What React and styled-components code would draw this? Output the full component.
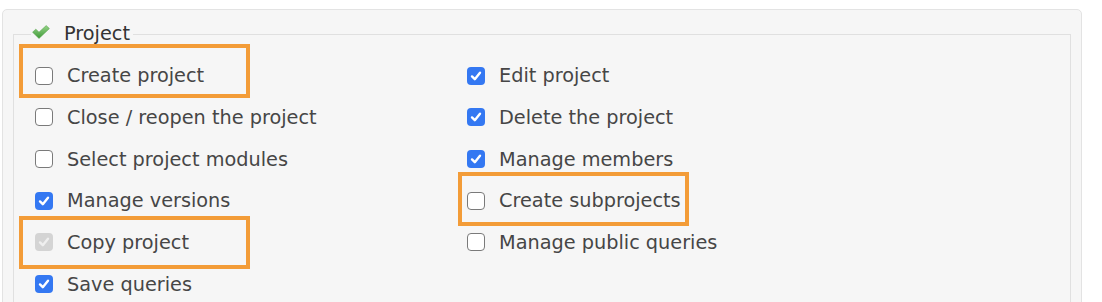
import React from 'react';
import styled, { createGlobalStyle } from 'styled-components';

const GlobalStyle = createGlobalStyle`
  body {
    margin: 0;
    background: #ffffff;
    font-family: "DejaVu Sans", Verdana, sans-serif;
  }
`;

const Page = styled.div`
  padding: 9px 20px 0 2px;
`;

const Box = styled.div`
  background: #f6f6f6;
  border: 1px solid #e3e3e3;
  border-radius: 5px;
  padding: 10px 10px 20px;
`;

const Fieldset = styled.fieldset`
  margin: 0;
  padding: 0;
  border: 1px solid #e0e0e0;
  min-width: 0;
`;

const Legend = styled.legend`
  margin-left: 17px;
  padding: 0 3px 0 1px;
  display: flex;
  align-items: center;
  gap: 14px;
  font-size: 19.3px;
  line-height: 28px;
  color: #333333;
`;

const Grid = styled.div`
  display: grid;
  grid-template-columns: 432px 432px;
  grid-auto-rows: 41.67px;
  padding: 7px 0 0 21px;
`;

const Row = styled.label`
  position: relative;
  display: flex;
  align-items: center;
  gap: 14px;
  font-size: 19.3px;
  color: #464646;
  white-space: nowrap;
`;

const Check = styled.span`
  width: 18px;
  height: 18px;
  box-sizing: border-box;
  border-radius: 4px;
  flex: none;
  display: flex;
  align-items: center;
  justify-content: center;
  background: ${p => (p.$state === 'on' ? '#3478f2' : p.$state === 'disabled' ? '#d4d4d4' : '#ffffff')};
  border: ${p => (p.$state === 'off' ? '1.5px solid #7a7a7a' : 'none')};
`;

const Highlight = styled.span`
  position: absolute;
  box-sizing: border-box;
  border: 4px solid #f39c38;
  pointer-events: none;
`;

const LegendIcon = () => (
  <svg width="18" height="14" viewBox="0 0 18 14" style={{ marginTop: -5 }}>
    <defs>
      <linearGradient id="g" x1="0" y1="0" x2="0" y2="1">
        <stop offset="0" stopColor="#95d487" />
        <stop offset="1" stopColor="#3f9a38" />
      </linearGradient>
    </defs>
    <path d="M0.6 7.2 L3.8 4.2 L7 7.2 L14.2 0.6 L17.4 3.6 L7 13.4 Z" fill="url(#g)" stroke="#57a44c" strokeWidth="0.6" strokeLinejoin="round" />
  </svg>
);

const Tick = ({ color }) => (
  <svg width="14" height="14" viewBox="0 0 14 14">
    <path d="M3 7.4 L5.8 10.2 L11 3.8" fill="none" stroke={color} strokeWidth="2.4" strokeLinecap="round" strokeLinejoin="round" />
  </svg>
);

const permissions = [
  { label: 'Create project', state: 'off', mark: { left: -16, top: -11, height: 54 } },
  { label: 'Edit project', state: 'on' },
  { label: 'Close / reopen the project', state: 'off' },
  { label: 'Delete the project', state: 'on' },
  { label: 'Select project modules', state: 'off' },
  { label: 'Manage members', state: 'on' },
  { label: 'Manage versions', state: 'on' },
  { label: 'Create subprojects', state: 'off', mark: { left: -9, top: -8, height: 54 } },
  { label: 'Copy project', state: 'disabled', mark: { left: -16, top: -6, height: 53 } },
  { label: 'Manage public queries', state: 'off' },
  { label: 'Save queries', state: 'on' },
];

export default function App() {
  return (
    <Page>
      <GlobalStyle />
      <Box>
        <Fieldset>
          <Legend>
            <LegendIcon />
            Project
          </Legend>
          <Grid>
            {permissions.map(item => (
              <Row key={item.label}>
                <Check $state={item.state}>
                  {item.state === 'on' && <Tick color="#ffffff" />}
                  {item.state === 'disabled' && <Tick color="#efefef" />}
                </Check>
                {item.label}
                {item.mark && (
                  <Highlight
                    style={{ left: item.mark.left, top: item.mark.top, width: 231, height: item.mark.height }}
                  />
                )}
              </Row>
            ))}
          </Grid>
        </Fieldset>
      </Box>
    </Page>
  );
}
